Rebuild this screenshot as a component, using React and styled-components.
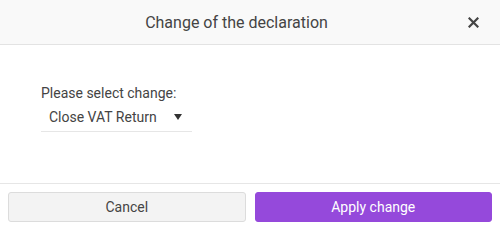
import React from 'react';
import styled, { createGlobalStyle } from 'styled-components';

const GlobalStyle = createGlobalStyle`
  html, body {
    margin: 0;
    padding: 0;
    background: #ffffff;
    font-family: Roboto, "Liberation Sans", sans-serif;
  }
`;

const Dialog = styled.div`
  width: 500px;
  height: 231px;
  display: flex;
  flex-direction: column;
  background: #ffffff;
`;

const Header = styled.div`
  height: 44px;
  border-bottom: 1px solid #e3e3e3;
  background: #f9f9f9;
  display: flex;
  align-items: center;
  justify-content: center;
  padding-right: 27px;
  position: relative;
`;

const Title = styled.h2`
  margin: 0;
  font-size: 16px;
  font-weight: 400;
  color: #444;
`;

const CloseButton = styled.button`
  position: absolute;
  right: 20px;
  top: 15px;
  width: 14px;
  height: 14px;
  padding: 0;
  border: none;
  background: none;
  cursor: pointer;
  display: flex;
  align-items: center;
  justify-content: center;
`;

const Body = styled.div`
  flex: 1;
  padding: 40px 41px 0;
`;

const Label = styled.div`
  font-size: 14px;
  color: #444;
  line-height: 17px;
`;

const Select = styled.div`
  margin-top: 5px;
  width: 151px;
  height: 25px;
  border-bottom: 1px solid #e6e6e6;
  display: flex;
  align-items: center;
  justify-content: space-between;
  padding: 0 10px 5px 8px;
  box-sizing: border-box;
  font-size: 14px;
  color: #444;
`;

const Arrow = styled.span`
  width: 0;
  height: 0;
  border-left: 4px solid transparent;
  border-right: 4px solid transparent;
  border-top: 6px solid #333;
`;

const Footer = styled.div`
  border-top: 1px solid #e6e6e6;
  display: flex;
  gap: 9px;
  padding: 8px;
  box-sizing: border-box;
  height: 48px;
`;

const Button = styled.button`
  flex: 1;
  height: 30px;
  border-radius: 3px;
  font-family: Roboto, "Liberation Sans", sans-serif;
  font-size: 14px;
  cursor: pointer;
  border: 1px solid ${p => (p.$primary ? '#9549db' : '#dcdcdc')};
  background: ${p => (p.$primary ? '#9549db' : '#f3f3f3')};
  color: ${p => (p.$primary ? '#ffffff' : '#444')};
`;

export default function App() {
  return (
    <>
      <GlobalStyle />
      <Dialog>
        <Header>
          <Title>Change of the declaration</Title>
          <CloseButton aria-label="Close">
            <svg width="11" height="11" viewBox="0 0 11 11">
              <path d="M1.5 1.5 L9.5 9.5 M9.5 1.5 L1.5 9.5" stroke="#444" strokeWidth="2.2" strokeLinecap="square" />
            </svg>
          </CloseButton>
        </Header>
        <Body>
          <Label>Please select change:</Label>
          <Select>
            <span>Close VAT Return</span>
            <Arrow />
          </Select>
        </Body>
        <Footer>
          <Button>Cancel</Button>
          <Button $primary>Apply change</Button>
        </Footer>
      </Dialog>
    </>
  );
}
